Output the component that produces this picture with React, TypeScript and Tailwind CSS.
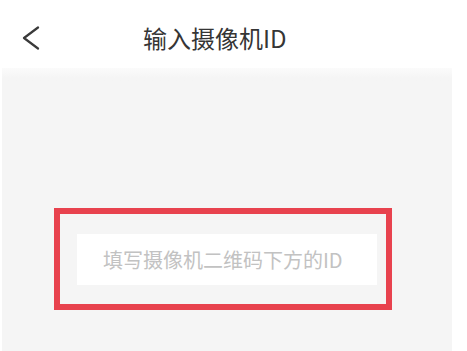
import React from "react";

export default function App() {
  return (
    <div
      className="w-[467px] h-[351px] bg-white overflow-hidden flex flex-col"
      style={{ fontFamily: '"Noto Sans CJK SC", "Noto Sans", sans-serif' }}
    >
      <div className="h-[68px] shrink-0 flex items-center">
        <svg
          className="ml-[22px] mt-[7px]"
          width="18"
          height="24"
          viewBox="0 0 18 24"
          fill="none"
        >
          <polyline
            points="16,1.5 2,12 16,22.5"
            stroke="#3a3a3a"
            strokeWidth="2.2"
            strokeLinecap="round"
            strokeLinejoin="round"
          />
        </svg>
        <div className="ml-[103px] mt-[7px] text-[24px] leading-none text-[#353535]">
          输入摄像机ID
        </div>
      </div>
      <div className="flex-1 ml-[2px] w-[450px] bg-gradient-to-b from-[#fbfbfb] via-[#f5f5f5] to-[#f5f5f5] bg-[length:100%_20px] bg-no-repeat bg-[#f5f5f5]">
        <div className="relative mt-[166px] ml-[75px] w-[300px] h-[51px] bg-white flex items-center">
          <span className="ml-[26px] text-[20px] leading-none text-[#c2c2c2]">
            填写摄像机二维码下方的ID
          </span>
          <div className="absolute left-[-23px] top-[-26px] w-[338px] h-[102px] border-[6px] border-[#e8424e]" />
        </div>
      </div>
    </div>
  );
}
